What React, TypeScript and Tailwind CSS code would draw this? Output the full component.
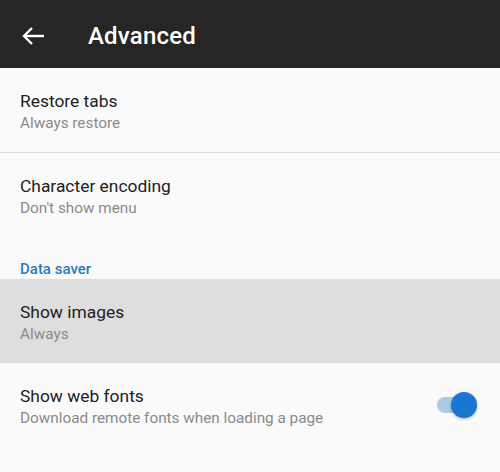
import React from "react";

function Row({ title, sub, right, className = "" }: { title: string; sub: string; right?: React.ReactNode; className?: string }) {
  return (
    <div className={`flex items-center h-[84px] pl-5 pr-6 ${className}`}>
      <div className="flex-1 flex flex-col pt-[4px]">
        <div className="text-[17.4px] leading-[22px] text-[#212121]">{title}</div>
        <div className="text-[15.3px] leading-[22px] text-[#8a8a8a]">{sub}</div>
      </div>
      {right}
    </div>
  );
}

export default function App() {
  return (
    <div className="w-[500px] h-[472px] bg-[#fafafa] overflow-hidden" style={{ fontFamily: "Roboto, 'Noto Sans', sans-serif" }}>
      <div className="h-[68px] bg-[#262626] flex items-center pt-[3px]">
        <svg width="24" height="20" viewBox="0 0 24 20" className="ml-[22px]">
          <path d="M2 10H22" stroke="white" strokeWidth="2.4" fill="none" />
          <path d="M10 2L2 10L10 18" stroke="white" strokeWidth="2.4" fill="none" strokeLinejoin="miter" />
        </svg>
        <div className="ml-[42px] text-white text-[24px] font-medium tracking-[0.2px]">Advanced</div>
      </div>
      <Row title="Restore tabs" sub="Always restore" />
      <div className="h-px bg-[#dcdcdc]" />
      <Row title="Character encoding" sub="Don't show menu" className="h-[83px]" />
      <div className="h-[42px] pl-5 flex items-end pb-0">
        <div className="text-[15px] font-medium text-[#2a7dc0] leading-[20px]">Data saver</div>
      </div>
      <Row title="Show images" sub="Always" className="bg-[#dedede]" />
      <Row
        title="Show web fonts"
        sub="Download remote fonts when loading a page"
        right={
          <div className="relative w-[40px] h-[26px] mr-[-1px]">
            <div className="absolute left-0 top-[5px] w-[34px] h-[16px] rounded-full bg-[#aacbe8]" />
            <div className="absolute right-0 top-0 w-[26px] h-[26px] rounded-full bg-[#1976d2] shadow-[0_1px_3px_rgba(0,0,0,0.3)]" />
          </div>
        }
      />
    </div>
  );
}
